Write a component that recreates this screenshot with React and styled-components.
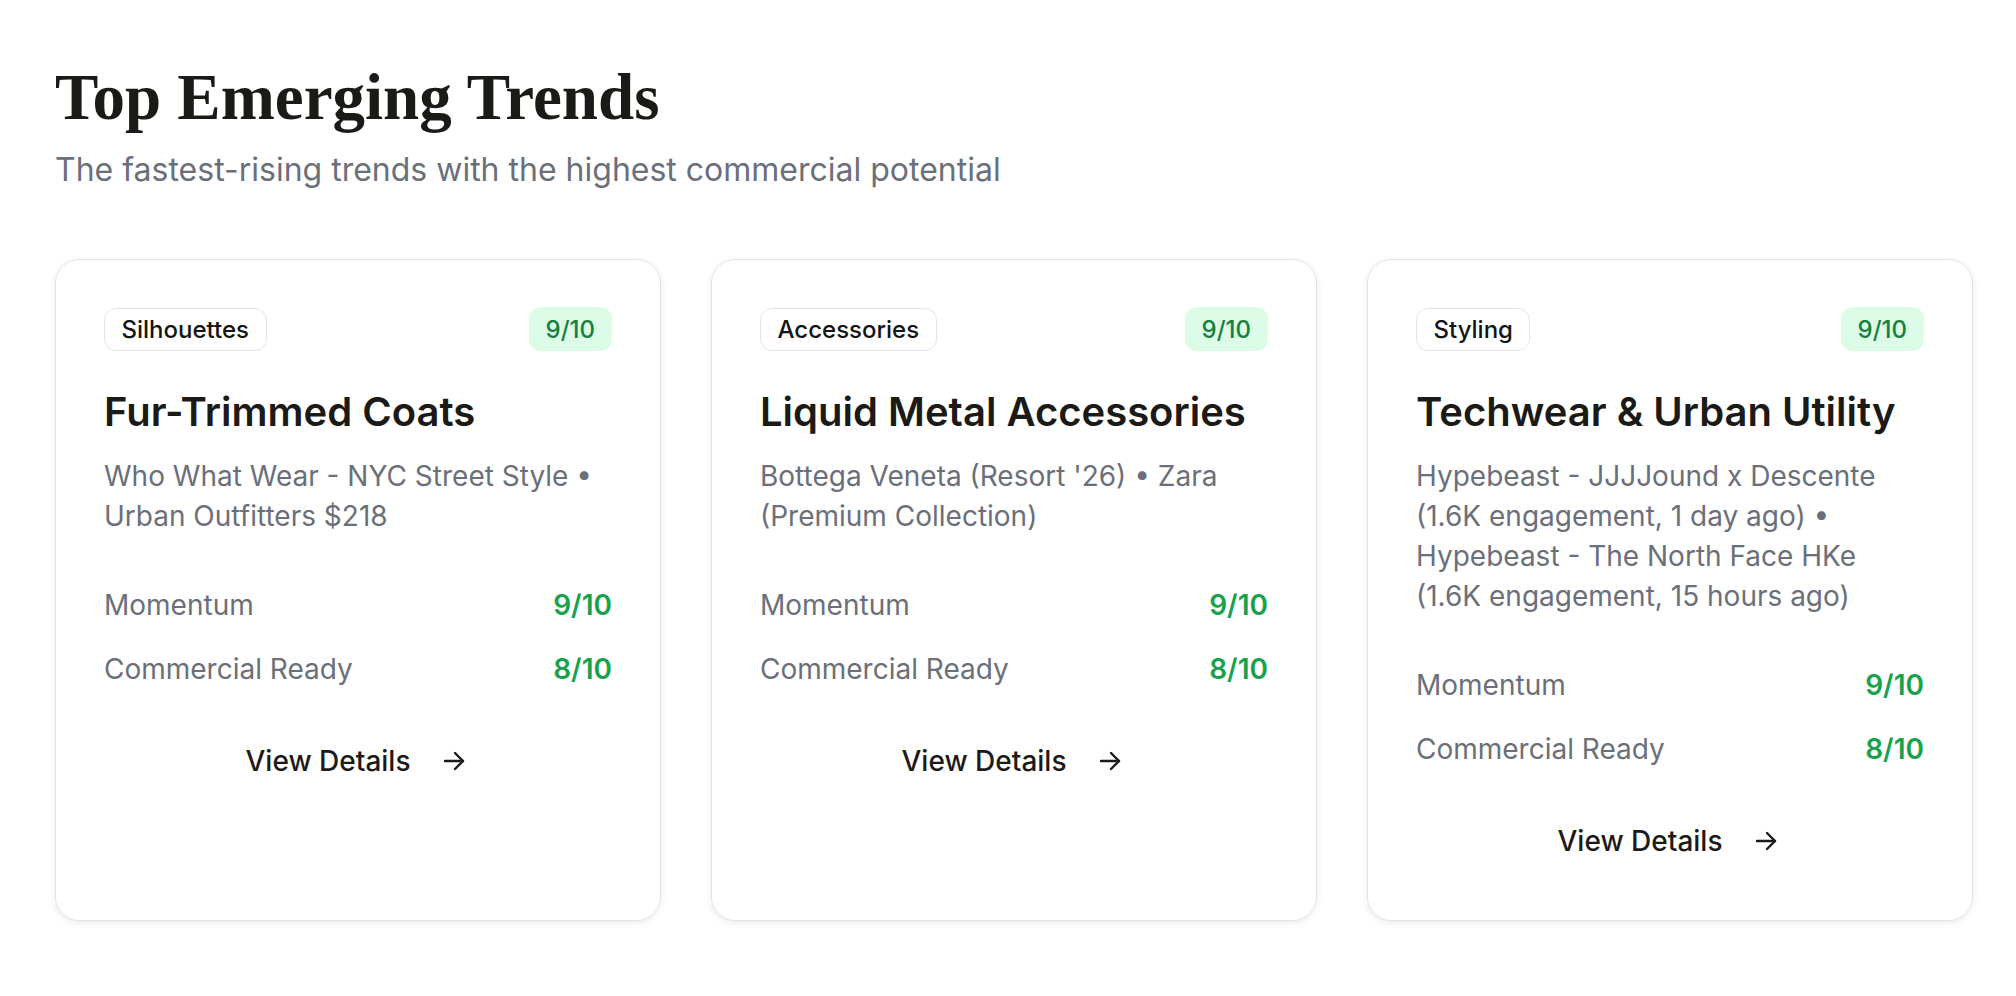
import React from 'react';
import styled, { createGlobalStyle } from 'styled-components';

const GlobalStyle = createGlobalStyle`
    * {
        box-sizing: border-box;
    }

    body {
        margin: 0;
        background: #ffffff;
        font-family: Inter, "Noto Sans", sans-serif;
    }
`

const Page = styled.main`
    padding: 58px 43px 60px 55px;
`

const Heading = styled.h1`
    margin: 0;
    font-family: "Liberation Serif", "Times New Roman", serif;
    font-weight: 700;
    font-size: 65px;
    line-height: 78px;
    color: #1c1a17;
`

const Subtitle = styled.p`
    margin: 13px 0 0;
    font-size: 32px;
    line-height: 42px;
    color: #6b6f7a;
`

const Grid = styled.section`
    margin-top: 68px;
    display: grid;
    grid-template-columns: repeat(3, 1fr);
    gap: 50px;
`

const Card = styled.article`
    display: flex;
    flex-direction: column;
    padding: 47px 48px;
    border: 1px solid #e4e4e7;
    border-radius: 24px;
    background: #fff;
    box-shadow: 0 2px 7px rgba(0, 0, 0, 0.08);
`

const TopRow = styled.div`
    display: flex;
    align-items: center;
    justify-content: space-between;
`

const Tag = styled.span`
    padding: 4px 16.5px;
    border: 1.5px solid #e4e4e7;
    border-radius: 12px;
    font-size: 24px;
    line-height: 33px;
    font-weight: 500;
    color: #141414;
`

const Score = styled.span`
    padding: 5.5px 17px;
    border-radius: 12px;
    background: #dcfce7;
    font-size: 24px;
    line-height: 33px;
    font-weight: 500;
    color: #15803d;
`

const Title = styled.h2`
    margin: 37px 0 0;
    font-size: 40px;
    line-height: 48px;
    font-weight: 600;
    color: #1c1a17;
`

const Description = styled.p`
    margin: 20px 0 0;
    font-size: 28px;
    line-height: 40px;
    color: #6b6f7a;
`

const Metrics = styled.div`
    margin-top: 49px;
    display: flex;
    flex-direction: column;
    gap: 24px;
`

const MetricRow = styled.div`
    display: flex;
    justify-content: space-between;
    font-size: 28px;
    line-height: 40px;
`

const MetricLabel = styled.span`
    color: #6b6f7a;
`

const MetricValue = styled.span`
    font-weight: 600;
    color: #16a34a;
`

const DetailsButton = styled.button`
    margin-top: 40px;
    align-self: center;
    display: flex;
    align-items: center;
    padding: 12px 27px 12px 22px;
    border: none;
    background: transparent;
    font-family: inherit;
    font-size: 28px;
    line-height: 40px;
    font-weight: 500;
    color: #1c1a17;
    cursor: pointer;

    svg {
        margin-left: 33px;
    }
`

const trends = [
    {
        category: 'Silhouettes',
        title: 'Fur-Trimmed Coats',
        sources: 'Who What Wear - NYC Street Style • Urban Outfitters $218',
        momentum: 9,
        commercial: 8,
    },
    {
        category: 'Accessories',
        title: 'Liquid Metal Accessories',
        sources: "Bottega Veneta (Resort '26) • Zara (Premium Collection)",
        momentum: 9,
        commercial: 8,
    },
    {
        category: 'Styling',
        title: 'Techwear & Urban Utility',
        sources: 'Hypebeast - JJJJound x Descente (1.6K engagement, 1 day ago) • Hypebeast - The North Face HKe (1.6K engagement, 15 hours ago)',
        momentum: 9,
        commercial: 8,
    },
]

const Arrow = () => (
    <svg width="22" height="22" viewBox="0 0 22 22" fill="none" stroke="currentColor" strokeWidth="2.4" strokeLinecap="round" strokeLinejoin="round">
        <path d="M2 11h18" />
        <path d="M12 3l8 8-8 8" />
    </svg>
)

const TrendCard = ({ trend }) => (
    <Card>
        <TopRow>
            <Tag>{trend.category}</Tag>
            <Score>{trend.momentum}/10</Score>
        </TopRow>
        <Title>{trend.title}</Title>
        <Description>{trend.sources}</Description>
        <Metrics>
            <MetricRow>
                <MetricLabel>Momentum</MetricLabel>
                <MetricValue>{trend.momentum}/10</MetricValue>
            </MetricRow>
            <MetricRow>
                <MetricLabel>Commercial Ready</MetricLabel>
                <MetricValue>{trend.commercial}/10</MetricValue>
            </MetricRow>
        </Metrics>
        <DetailsButton>
            View Details
            <Arrow />
        </DetailsButton>
    </Card>
)

export default function App() {
    return (
        <Page>
            <GlobalStyle />
            <Heading>Top Emerging Trends</Heading>
            <Subtitle>The fastest-rising trends with the highest commercial potential</Subtitle>
            <Grid>
                {trends.map((trend) => (
                    <TrendCard key={trend.title} trend={trend} />
                ))}
            </Grid>
        </Page>
    )
}
